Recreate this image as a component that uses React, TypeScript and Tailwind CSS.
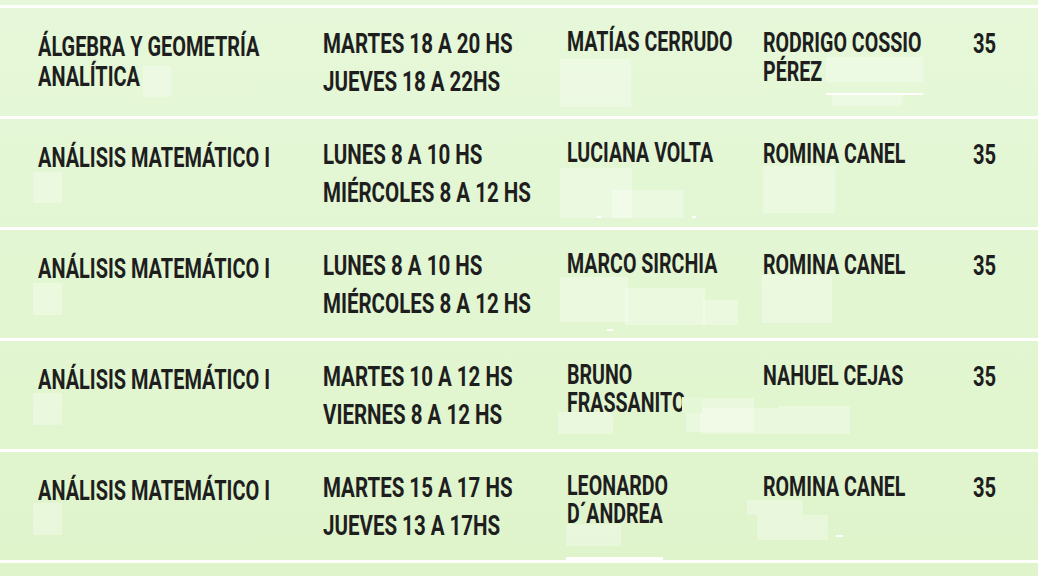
import React from 'react';

type Row = {
  subject: string[];
  times: string[];
  prof: string[];
  jtp: string[];
  cupo: string;
};

const ROWS: Row[] = [
  {
    subject: ['ÁLGEBRA Y GEOMETRÍA', 'ANALÍTICA'],
    times: ['MARTES 18 A 20 HS', 'JUEVES 18 A 22HS'],
    prof: ['MATÍAS CERRUDO'],
    jtp: ['RODRIGO COSSIO', 'PÉREZ'],
    cupo: '35',
  },
  {
    subject: ['ANÁLISIS MATEMÁTICO I'],
    times: ['LUNES 8 A 10 HS', 'MIÉRCOLES 8 A 12 HS'],
    prof: ['LUCIANA VOLTA'],
    jtp: ['ROMINA CANEL'],
    cupo: '35',
  },
  {
    subject: ['ANÁLISIS MATEMÁTICO I'],
    times: ['LUNES 8 A 10 HS', 'MIÉRCOLES 8 A 12 HS'],
    prof: ['MARCO SIRCHIA'],
    jtp: ['ROMINA CANEL'],
    cupo: '35',
  },
  {
    subject: ['ANÁLISIS MATEMÁTICO I'],
    times: ['MARTES 10 A 12 HS', 'VIERNES 8 A 12 HS'],
    prof: ['BRUNO', 'FRASSANITO'],
    jtp: ['NAHUEL CEJAS'],
    cupo: '35',
  },
  {
    subject: ['ANÁLISIS MATEMÁTICO I'],
    times: ['MARTES 15 A 17 HS', 'JUEVES 13 A 17HS'],
    prof: ['LEONARDO', 'D´ANDREA'],
    jtp: ['ROMINA CANEL'],
    cupo: '35',
  },
];

// faint erased blocks left over in the original image
const PATCHES = [
  'left-[143px] top-[66px] w-[28px] h-[31px]',
  'left-[560px] top-[59px] w-[71px] h-[48px]',
  'left-[826px] top-[57px] w-[97px] h-[25px]',
  'left-[832px] top-[95px] w-[70px] h-[11px]',
  'left-[33px] top-[172px] w-[29px] h-[31px]',
  'left-[560px] top-[168px] w-[72px] h-[50px]',
  'left-[612px] top-[190px] w-[71px] h-[28px]',
  'left-[763px] top-[166px] w-[72px] h-[47px]',
  'left-[33px] top-[283px] w-[29px] h-[32px]',
  'left-[560px] top-[277px] w-[68px] h-[45px]',
  'left-[625px] top-[288px] w-[80px] h-[37px]',
  'left-[703px] top-[300px] w-[35px] h-[25px]',
  'left-[762px] top-[275px] w-[70px] h-[48px]',
  'left-[33px] top-[393px] w-[29px] h-[32px]',
  'left-[558px] top-[412px] w-[55px] h-[22px]',
  'left-[686px] top-[398px] w-[68px] h-[34px]',
  'left-[700px] top-[408px] w-[78px] h-[26px]',
  'left-[778px] top-[406px] w-[72px] h-[28px]',
  'left-[33px] top-[503px] w-[29px] h-[32px]',
  'left-[566px] top-[524px] w-[55px] h-[22px]',
  'left-[747px] top-[500px] w-[56px] h-[15px]',
  'left-[757px] top-[515px] w-[71px] h-[25px]',
];

const Lines = ({ lines, className, squeeze }: { lines: string[]; className: string; squeeze: string }) => (
  <div className={className}>
    {lines.map((l) => (
      <div key={l} className={`whitespace-nowrap origin-left ${squeeze}`}>
        {l}
      </div>
    ))}
  </div>
);

const App = () => {
  return (
    <div className="relative w-[1038px] h-[576px] overflow-hidden bg-gradient-to-b from-[#e6f8d9] to-[#dff4cb] pt-[5px] font-['Roboto',sans-serif] font-bold text-[28px] text-[#1e1e1e]">
      {ROWS.map((row, i) => (
        <div key={i} className="flex h-[111px] border-t-[3px] border-white pl-[38px]">
          <Lines lines={row.subject} squeeze="scale-x-[0.712]" className="w-[285px] pt-[24px] leading-[30px]" />
          <Lines lines={row.times} squeeze="scale-x-[0.732]" className="w-[244px] pt-[17px] leading-[38px]" />
          <Lines lines={row.prof} squeeze="scale-x-[0.7]" className="w-[196px] pt-[20px] leading-[28px]" />
          <Lines lines={row.jtp} squeeze="scale-x-[0.7]" className="w-[210px] pt-[20px] leading-[29px]" />
          <Lines lines={[row.cupo]} squeeze="scale-x-[0.72]" className="pt-[21px] leading-[29px]" />
        </div>
      ))}
      <div className="border-t-[3px] border-white" />

      {PATCHES.map((p) => (
        <div key={p} className={`absolute bg-white/30 ${p}`} />
      ))}
      {/* cover over the last letter of FRASSANITO */}
      <div className="absolute left-[682px] top-[397px] w-[20px] h-[16px] bg-[#e4f7d6]" />
      {/* stray white marks */}
      <div className="absolute left-[826px] top-[93px] w-[97px] h-[2px] bg-white" />
      <div className="absolute left-[597px] top-[216px] w-[4px] h-[2px] bg-white" />
      <div className="absolute left-[692px] top-[216px] w-[4px] h-[2px] bg-white" />
      <div className="absolute left-[607px] top-[329px] w-[6px] h-[2px] bg-white" />
      <div className="absolute left-[836px] top-[535px] w-[7px] h-[2px] bg-white" />
      <div className="absolute left-[566px] top-[557px] w-[97px] h-[3px] bg-white" />
    </div>
  );
};

export default App;
